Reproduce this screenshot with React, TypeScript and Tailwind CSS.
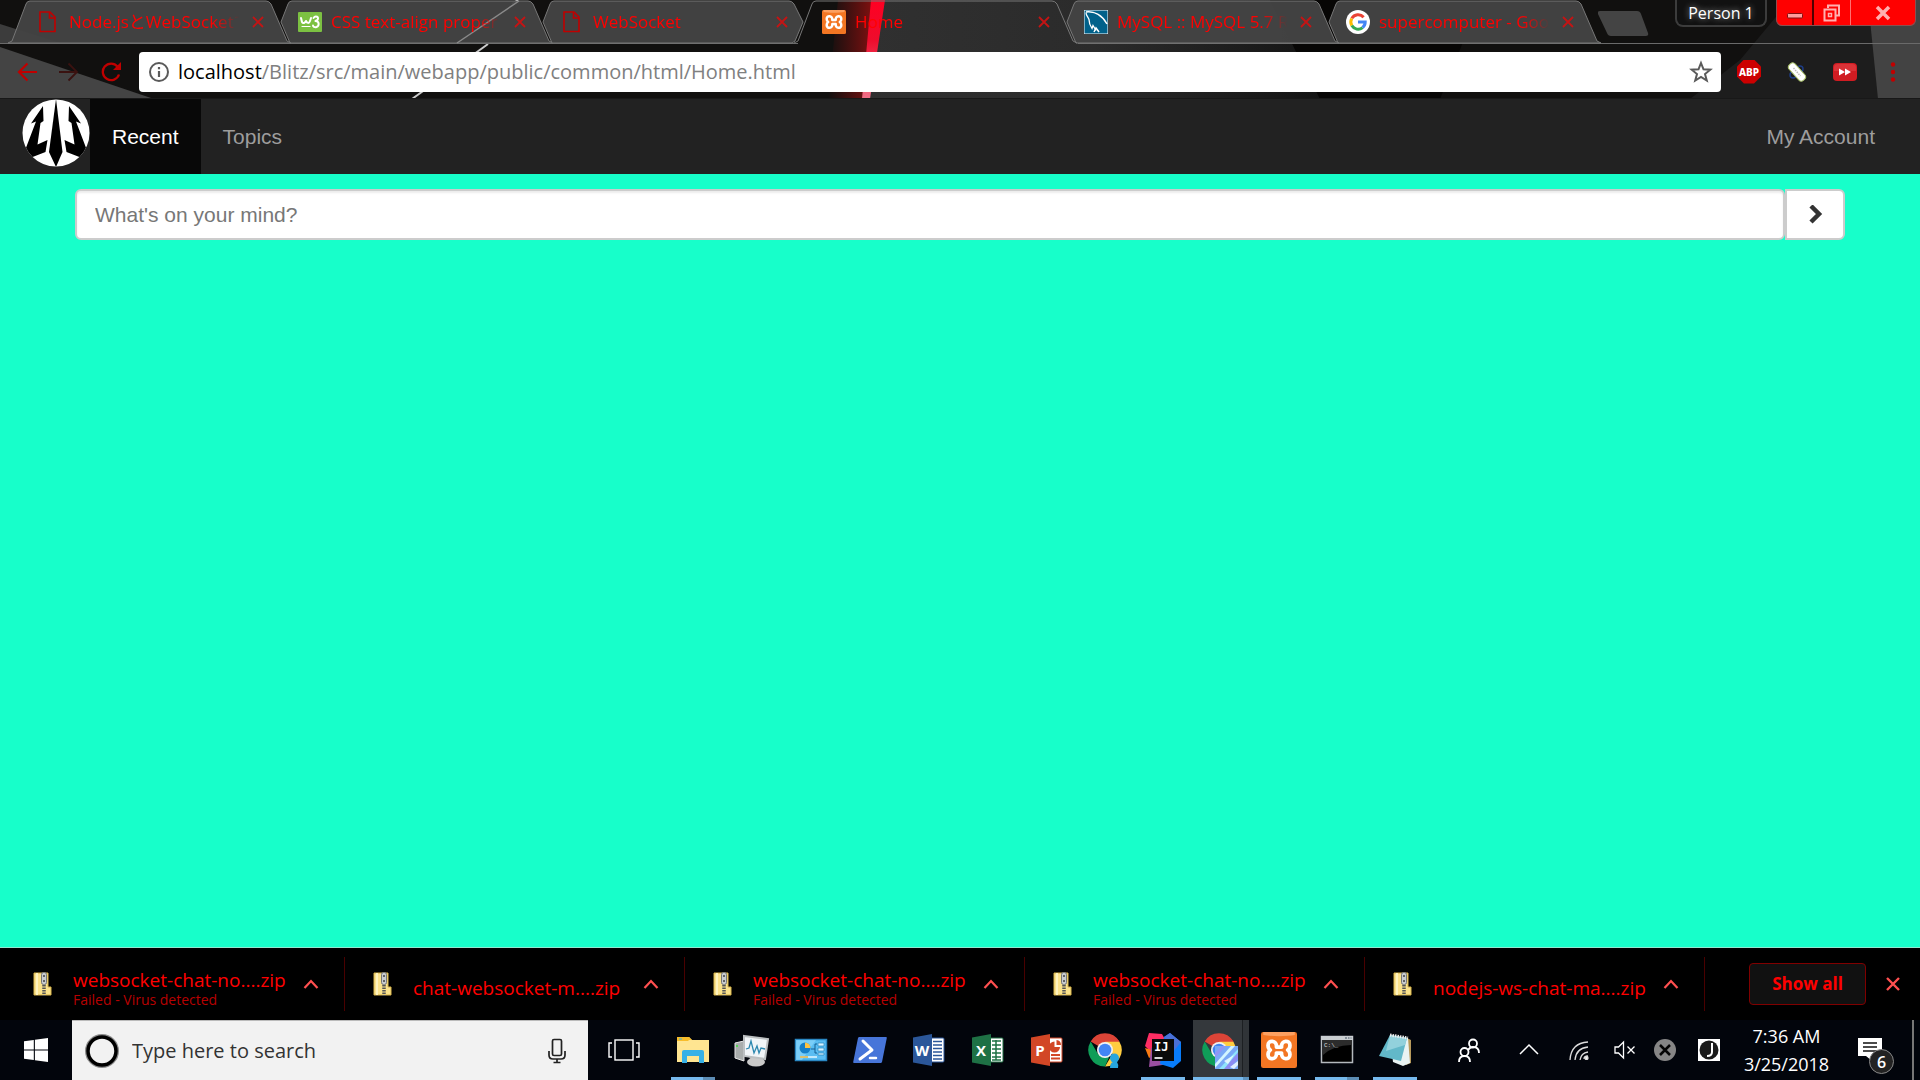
import React from "react";

type P = { className?: string };

const UI = "font-['Open_Sans','Noto_Sans_CJK_JP',sans-serif]";

/* ---------- favicons and small glyphs ---------- */

const FileIcon = () => (
  <svg viewBox="0 0 24 24" className="h-6 w-6" fill="none" stroke="#c00000" strokeWidth="1.6">
    <path d="M4 2h10l5 5v14.500H4z" />
    <path d="M13.500 2v6H19" />
  </svg>
);

const W3Icon = () => (
  <svg viewBox="0 0 24 24" className="h-6 w-6" fill="none" stroke="#fff" strokeLinecap="round" strokeLinejoin="round">
    <rect x="0" y="2" width="24" height="20" rx="1" fill="#7cc142" stroke="none" />
    <path d="M3 8l1 4c1 2 3 1 4-1 1 2 3 3 4 0l1-3" strokeWidth="2" />
    <path d="M15.500 8c2-3 6-1 4 2l-2 1c4 0 4 5 1 6-2 .5-3.500-.5-3.500-1.500" strokeWidth="2" />
    <path d="M4 16.500h8" strokeWidth="1.200" />
  </svg>
);

const XamppIcon = ({ className = "h-6 w-6" }: P) => (
  <svg viewBox="0 0 24 24" className={className}>
    <rect width="24" height="24" rx="1.500" fill="#f37623" />
    <path d="M1.500 0h21v2c-5 1-16 1-21 0z" fill="#ffb27c" opacity=".7" />
    <path
      d="M10.300 10C10.800 5.200 4.500 5 4.700 9c0 2 1.500 3 1.500 3s-1.500 1-1.500 3c-.2 4 6.100 3.800 5.600-1h3.400c-.5 4.800 5.800 5 5.600 1 0-2-1.500-3-1.500-3s1.500-1 1.500-3c.2-4-6.100-3.800-5.600 1z"
      fill="#f37623"
      stroke="#fff"
      strokeWidth="2.500"
      strokeLinejoin="round"
    />
  </svg>
);

const MysqlIcon = () => (
  <svg viewBox="0 0 24 24" className="h-6 w-6" fill="none" stroke="#fff">
    <rect width="24" height="24" rx="1" fill="#00618a" />
    <path d="M2 2.500c0 3 2 4 3 7 0 4 1 6 3 9l1-3 3 5" strokeWidth="1.300" />
    <path d="M2 2c8-1 16 3 21 12" strokeWidth="1.500" />
    <path d="M10 22l2-4 3 4" strokeWidth="1.500" />
  </svg>
);

const GoogleIcon = () => (
  <svg viewBox="0 0 24 24" className="h-6 w-6" fill="none" strokeWidth="3">
    <circle cx="12" cy="12" r="12" fill="#fff" />
    <path d="M17.600 7.200A7.200 7.200 0 0 0 5.800 8.400" stroke="#ea4335" />
    <path d="M5.800 8.400a7.200 7.200 0 0 0 0 7.200" stroke="#fbbc05" />
    <path d="M5.800 15.600a7.200 7.200 0 0 0 10.800 2" stroke="#34a853" />
    <path d="M16.600 17.600A7.200 7.200 0 0 0 19.200 12H12" stroke="#4285f4" />
  </svg>
);

/* ---------- browser tabs ---------- */

type TabInfo = { title: string; icon: React.ReactNode; shape: "first" | "mid" | "under" | "active"; z: string };

const TABS: TabInfo[] = [
  { title: "Node.jsとWebSocketで", icon: <FileIcon />, shape: "first", z: "z-10" },
  { title: "CSS text-align proper", icon: <W3Icon />, shape: "mid", z: "z-0" },
  { title: "WebSocket", icon: <FileIcon />, shape: "under", z: "z-0" },
  { title: "Home", icon: <XamppIcon />, shape: "active", z: "z-20" },
  { title: "MySQL :: MySQL 5.7 R", icon: <MysqlIcon />, shape: "mid", z: "z-10" },
  { title: "supercomputer - Goo", icon: <GoogleIcon />, shape: "mid", z: "z-0" },
];

const OUTLINE = {
  first: "M0 43L4 41L18 4Q19 1 22 1H258Q261 1 263 4L279 41L283 43Z",
  mid: "M20 43L11 22L18 4Q19 1 22 1H258Q261 1 263 4L279 41L283 43Z",
  under: "M20 43L11 22L18 4Q19 1 22 1H257Q260 1 262 4L271 22L263 41L260 43Z",
  active: "M0 43L4 41L18 4Q19 1 22 1H258Q261 1 263 4L279 41L283 43",
};

const Tab = ({ tab }: { tab: TabInfo }) => (
  <div className={`relative -mr-[21px] h-11 w-[283px] shrink-0 ${tab.z}`}>
    <svg viewBox="0 0 283 44" className="absolute inset-0 h-11 w-[283px]">
      <path d={OUTLINE[tab.shape]} fill={tab.shape === "active" ? "none" : "#444444"} fillOpacity=".96" stroke="#777" />
      {tab.title.startsWith("CSS") && <path d="M249 1L187 43" stroke="#8a8a8a" strokeWidth="1.500" />}
    </svg>
    <div className="relative flex h-11 items-center pb-px pl-7">
      {tab.icon}
      <span className="ml-[9px] w-[174px] overflow-hidden whitespace-nowrap text-[17px] leading-6 text-[#ff0000] [mask-image:linear-gradient(to_right,#000_82%,transparent_98%)]">
        {tab.title}
      </span>
      <button aria-label={`Close ${tab.title}`} className="ml-[9px] h-3 w-3">
        <svg viewBox="0 0 12 12" className="h-3 w-3" stroke="#c41414" strokeWidth="1.800">
          <path d="M1 1l10 10M11 1L1 11" />
        </svg>
      </button>
    </div>
  </div>
);

const ThemeBackdrop = () => (
  <svg viewBox="0 0 1920 99" preserveAspectRatio="none" className="absolute inset-0 h-full w-full">
    <defs>
      <linearGradient id="glow">
        <stop offset="0" stopColor="#7a1010" stopOpacity="0" />
        <stop offset="1" stopColor="#8a1010" />
      </linearGradient>
      <linearGradient id="steel">
        <stop offset="0" stopColor="#303030" />
        <stop offset=".5" stopColor="#2b2b2b" />
        <stop offset="1" stopColor="#141414" />
      </linearGradient>
      <linearGradient id="beam" x1="0" y1="0" x2="0" y2="1">
        <stop offset="0" stopColor="#ff0022" />
        <stop offset=".4" stopColor="#ee0c2c" />
        <stop offset="1" stopColor="#f07088" />
      </linearGradient>
    </defs>
    <rect width="1920" height="99" fill="#11100f" />
    <path d="M0 24L60 43H0z" fill="#3c3c3c" />
    <path d="M0 47L154 99H0z" fill="#444" />
    <path d="M488 44L412 99" stroke="#ccc" strokeWidth="2" />
    <path d="M518 0L512 4" stroke="#eee" strokeWidth="2" />
    <path d="M880 0H1270L1320 99H868z" fill="url(#steel)" />
    <path d="M1270 0H1480L1440 99H1320z" fill="#070605" />
    <path d="M838 0H876L868 99H828z" fill="url(#glow)" />
    <path d="M871 0H885L870 99H862z" fill="url(#beam)" />
    <path d="M1790 0H1920V99H1690L1740 60z" fill="#1d1d1d" />
    <path d="M1868 0H1920V99H1878z" fill="#434343" />
    <path d="M0 98.500H1920" stroke="#181818" />
    <path d="M0 43.500H798M1078 43.500H1920" stroke="#6a6a6a" />
  </svg>
);

const WindowControls = () => (
  <div className="flex h-[26px] overflow-hidden rounded-b-md border-x border-b border-[#8a5050] bg-[#ff0000]">
    <button aria-label="Minimize" className="grid w-[37px] place-items-center border-r-2 border-[#500000]">
      <svg viewBox="0 0 20 20" className="h-5 w-5"><rect x="2.500" y="10.500" width="15" height="4.500" rx="1" fill="#ff9c9c" stroke="#801010" /></svg>
    </button>
    <button aria-label="Restore" className="grid w-[37px] place-items-center border-r border-[#ff7070]">
      <svg viewBox="0 0 20 20" className="h-5 w-5" fill="none" stroke="#ffb0b0" strokeWidth="2">
        <path d="M6 5V2.500h11v10h-3" /><rect x="2.500" y="6.500" width="11" height="11" /><rect x="6.500" y="10.500" width="3" height="3" strokeWidth="1.500" />
      </svg>
    </button>
    <button aria-label="Close window" className="grid w-16 place-items-center">
      <svg viewBox="0 0 20 20" className="h-5 w-5" stroke="#ffb0b0" strokeWidth="3.500"><path d="M4 4l12 12M16 4L4 16" /></svg>
    </button>
  </div>
);

const BrowserChrome = () => (
  <header className="relative">
    <ThemeBackdrop />
    <div className="relative flex h-11 items-start pl-2">
      {TABS.map((t) => <Tab key={t.title} tab={t} />)}
      <button aria-label="New tab" className="ml-[18px] mt-[11px]">
        <svg viewBox="0 0 51 26" className="h-[26px] w-[51px]"><path d="M2 0H39Q42 0 43 3L50 22Q51 25 48 25H13Q10 25 9 22L0 3Q-1 0 2 0z" fill="#444" /></svg>
      </button>
      <div className="ml-auto flex pr-1">
        <button className="mr-[9px] h-[27px] w-[92px] rounded-b-lg border-x-2 border-b-2 border-[#3c3c3c] bg-[#111] text-base leading-6 text-white [text-shadow:0_0_6px_#aaa]">
          Person 1
        </button>
        <WindowControls />
      </div>
    </div>
    <div className="relative flex h-[55px] items-center">
      <div className="flex w-[139px] items-center gap-[22px] pl-[17px]">
        <button aria-label="Back">
          <svg viewBox="0 0 20 20" className="h-5 w-5" fill="none" stroke="#c00000" strokeWidth="2.200"><path d="M20 10H2M10.500 1.500L2 10l8.500 8.500" /></svg>
        </button>
        <button aria-label="Forward">
          <svg viewBox="0 0 20 20" className="h-5 w-5" fill="none" stroke="#3a1210" strokeWidth="1.800"><path d="M0 10h18M9.500 1.500L18 10l-8.500 8.500" /></svg>
        </button>
        <button aria-label="Reload">
          <svg viewBox="0 0 20 20" className="h-5 w-5" fill="none" stroke="#c00000" strokeWidth="2.300">
            <path d="M16.500 4.500A8.300 8.300 0 1 0 18 12.500" /><path d="M20 0v8h-8z" fill="#c00000" stroke="none" />
          </svg>
        </button>
      </div>
      <div className="flex h-10 flex-1 items-center rounded-sm bg-white pl-2.5 pr-2">
        <svg viewBox="0 0 20 20" className="h-5 w-5" fill="none" stroke="#5a5a5a" strokeWidth="2">
          <circle cx="10" cy="10" r="9" /><path d="M10 9v6M10 5v2.200" strokeWidth="2.200" />
        </svg>
        <span className="ml-[9px] flex-1 text-xl leading-6 text-[#808080]">
          <span className="text-black">localhost</span>/Blitz/src/main/webapp/public/common/html/Home.html
        </span>
        <button aria-label="Bookmark this page">
          <svg viewBox="0 0 24 24" className="h-6 w-6" fill="none" stroke="#5a5a5a" strokeWidth="2"><path d="M12 3l2.500 6.300 6.800.4-5.300 4.300 1.800 6.600L12 17l-5.800 3.600L8 14 2.700 9.700l6.800-.4z" /></svg>
        </button>
      </div>
      <div className="flex items-center gap-6 pl-4 pr-[15px]">
        <button aria-label="Adblock Plus" className="grid h-6 w-6 place-items-center bg-[#cc0000] font-['Noto_Sans'] text-[10px] font-extrabold leading-6 text-white [clip-path:polygon(29%_0,71%_0,100%_29%,100%_71%,71%_100%,29%_100%,0_71%,0_29%)]">ABP</button>
        <button aria-label="Eraser extension">
          <svg viewBox="0 0 24 24" className="h-6 w-6">
            <circle cx="15" cy="9" r="3" fill="none" stroke="#1d3c84" strokeWidth="1.500" /><circle cx="8" cy="15" r="3" fill="none" stroke="#1d3c84" strokeWidth="1.500" />
            <rect x="1.500" y="8" width="21" height="8" rx="3.500" fill="#fff" stroke="#a9c06a" transform="rotate(48 12 12)" />
            <path d="M8.500 8l7 8" stroke="#bbb" strokeWidth="1.500" strokeDasharray="1.500 1" />
          </svg>
        </button>
        <button aria-label="Video speed extension">
          <svg viewBox="0 0 24 24" className="h-6 w-6">
            <rect x="0" y="3" width="24" height="18" rx="4" fill="#d01c22" /><path d="M1 11V7q0-3 4-3h14q4 0 4 3v4z" fill="#e4484c" opacity=".5" /><path d="M6 8.500l6 3.500-6 3.500zM12 8.500l6 3.500-6 3.500z" fill="#fff" />
          </svg>
        </button>
        <button aria-label="Menu">
          <svg viewBox="0 0 24 24" className="h-6 w-6" fill="#c00000"><circle cx="12" cy="4.500" r="2.200" /><circle cx="12" cy="12" r="2.200" /><circle cx="12" cy="19.500" r="2.200" /></svg>
        </button>
      </div>
    </div>
  </header>
);

/* ---------- page ---------- */

const Trident = () => (
  <svg viewBox="0 0 68 68" className="h-[68px] w-[68px]">
    <defs><clipPath id="disc"><circle cx="34" cy="34" r="33.500" /></clipPath></defs>
    <circle cx="34" cy="34" r="33.500" fill="#fff" />
    <g clipPath="url(#disc)" fill="#000">
      <path d="M34 0L40.500 53L34 68L27 53z" />
      <path d="M21 7L9 24.500L14 22.500L2 54L8 59L23.500 53L25.500 41L15.500 45.500L18.500 24L21.500 22z" />
      <path d="M47 7L59 24.500L54 22.500L66 54L60 59L44.500 53L42.500 41L52.500 45.500L49.500 24L46.500 22z" />
    </g>
  </svg>
);

const Page = () => (
  <div className="flex flex-1 flex-col bg-[#17ffca] font-['Liberation_Sans',Arial,sans-serif] text-[21px] leading-[30px]">
    <nav className="flex h-[75px] bg-[#222222] pl-[22px] pr-[22px]">
      <a href="#home" aria-label="Blitz home"><Trident /></a>
      <a href="#recent" className="flex items-center bg-[#080808] px-[22px] text-white">Recent</a>
      <a href="#topics" className="flex items-center px-[22px] text-[#9d9d9d]">Topics</a>
      <a href="#account" className="ml-auto flex items-center px-[23px] text-[#9d9d9d]">My Account</a>
    </nav>
    <form className="mx-[75px] mt-[15px] flex h-[51px]" onSubmit={(e) => e.preventDefault()}>
      <input
        aria-label="What's on your mind?"
        placeholder="What's on your mind?"
        className="min-w-0 flex-1 rounded-md border-2 border-[#cccccc] bg-white px-[18px] shadow-[inset_0_2px_2px_rgba(0,0,0,0.075)] outline-none placeholder:text-[#777777]"
      />
      <button aria-label="Post" className="grid w-[60px] place-items-center rounded-r-md border-2 border-[#cccccc] bg-white">
        <svg viewBox="0 0 20 20" className="h-5 w-5" fill="none" stroke="#333" strokeWidth="4.500"><path d="M6 1l8 8-8 8" /></svg>
      </button>
    </form>
  </div>
);

/* ---------- download shelf ---------- */

const ZipIcon = () => (
  <svg viewBox="0 0 20 24" className="h-6 w-5">
    <path d="M1 1h14v14h3v8H1z" fill="#fbe38c" stroke="#d8b44a" /><path d="M4 1v22" stroke="#fff3bd" strokeWidth="2" />
    <rect x="8.500" y="0.500" width="5" height="12" rx="2" fill="#c9ccd0" stroke="#777" /><path d="M11 3v2M11 8v2" stroke="#444" strokeWidth="1.500" />
    <path d="M11 13v11" stroke="#555" strokeWidth="3.500" strokeDasharray="1.500 1" />
  </svg>
);

const DOWNLOADS = [
  { name: "websocket-chat-no....zip", failed: true },
  { name: "chat-websocket-m....zip", failed: false },
  { name: "websocket-chat-no....zip", failed: true },
  { name: "websocket-chat-no....zip", failed: true },
  { name: "nodejs-ws-chat-ma....zip", failed: false },
];

const DownloadShelf = () => (
  <section aria-label="Downloads" className="flex h-[73px] items-center border-t border-[#8fe8d0] bg-black pl-[5px] pr-5">
    {DOWNLOADS.map((d, i) => (
      <div key={i} className="flex h-[54px] w-[340px] shrink-0 items-center border-r border-[#4a0000] pl-7 pr-[25px]">
        <ZipIcon />
        <div className={d.failed ? "ml-5 flex-1 whitespace-nowrap pt-2.5" : "ml-5 flex-1 whitespace-nowrap pt-2"}>
          <div className="text-[19px] leading-[22px] text-[#ff0000]">{d.name}</div>
          {d.failed && <div className="text-sm leading-[18px] text-[#b80000]">Failed - Virus detected</div>}
        </div>
        <button aria-label="Download options">
          <svg viewBox="0 0 16 16" className="h-4 w-4" fill="none" stroke="#ff5050" strokeWidth="2.200"><path d="M1.500 12L8 5l6.500 7" /></svg>
        </button>
      </div>
    ))}
    <button className="ml-auto h-[42px] w-[117px] rounded border border-[#800000] bg-[#111] text-[17px] font-bold leading-6 text-[#ff0000]">Show all</button>
    <button aria-label="Close downloads bar" className="ml-5">
      <svg viewBox="0 0 14 14" className="h-3.5 w-3.5" stroke="#ff5050" strokeWidth="2.400"><path d="M1 1l12 12M13 1L1 13" /></svg>
    </button>
  </section>
);

/* ---------- taskbar ---------- */

const ExplorerIcon = () => (
  <svg viewBox="0 0 36 36" className="h-9 w-9">
    <path d="M2 5h12l3 3h17v22H2z" fill="#ffe591" /><path d="M2 5h12l3 3h-3l-1 1H2z" fill="#f8bd2b" /><path d="M4 7h3" stroke="#3ab0e2" />
    <path d="M7 31V20q0-2 2-2h18q2 0 2 2v11h-5v-7H12v7z" fill="#38b1e6" />
  </svg>
);
const MonitorIcon = () => (
  <svg viewBox="0 0 36 36" className="h-9 w-9">
    <path d="M1 11l9-2v20l-9-3z" fill="#a9adad" stroke="#e8e8e8" /><circle cx="3" cy="14" r="1" fill="#3be03b" />
    <path d="M15 24l8 3 1 6h-6z" fill="#aaa" /><ellipse cx="22" cy="30" rx="9" ry="4.500" fill="#c9c9c9" />
    <path d="M10 4l24 3-3 20-21-3z" fill="#f1f5f8" stroke="#bcc0c2" strokeWidth="2" />
    <path d="M12 17l3-1 2-7 3 12 3-7 2 7 2-5 4 1" fill="none" stroke="#2d88b0" strokeWidth="1.300" />
  </svg>
);
const ControlIcon = () => (
  <svg viewBox="0 0 36 36" className="h-9 w-9">
    <rect x="2.500" y="7.500" width="31" height="21" fill="#5abdf2" stroke="#2a88c4" strokeWidth="1.500" /><path d="M3 8h20L9 28H3z" fill="#90d8fb" opacity=".6" />
    <circle cx="12" cy="16" r="5.500" fill="#167fc8" /><path d="M12 16v-5.500a5.500 5.500 0 0 1 5.500 5.500z" fill="#ffc342" />
    <path d="M18 17h4v-5h2M22 17v4h2" fill="none" stroke="#155e92" /><path d="M25 11h6v3h-6zM25 16h6v3h-6zM25 21h6v2h-6z" fill="#d7f3ff" stroke="#2582b8" strokeWidth=".7" />
    <path d="M7 25h17" stroke="#e4f8ff" strokeWidth="1.500" /><path d="M7 25h8" stroke="#e0b040" strokeWidth="1.500" />
  </svg>
);
const PowerShellIcon = () => (
  <svg viewBox="0 0 36 36" className="h-9 w-9">
    <path d="M6 6q.3-1 1.500-1H34q1 0 .8 1L30 30q-.3 1-1.500 1H2q-1 0-.8-1z" fill="#4775d9" />
    <path d="M11 9l9 9-12 9" fill="none" stroke="#fff" strokeWidth="3" strokeLinecap="round" strokeLinejoin="round" /><path d="M18 26h6" stroke="#fff" strokeWidth="2.500" strokeLinecap="round" />
  </svg>
);
const OfficeIcon = ({ letter, color, kind }: { letter: string; color: string; kind: "w" | "x" | "p" }) => (
  <svg viewBox="0 0 36 36" className="h-9 w-9">
    <rect x="15" y="6" width="18" height="24" rx="1" fill="#fff" stroke={color} />
    {kind === "w" && <path d="M22 9.500h9M22 13h9M22 16.500h9M22 20h9M22 23.500h9M22 27h9" stroke={color} strokeWidth="1.500" />}
    {kind === "x" && <path d="M22 9h9M22 13h9M22 17h9M22 21h9M22 25h9M22 28h9M26 8v20" stroke={color} strokeWidth="1.500" />}
    {kind === "p" && <path d="M22 23h9M22 26.500h9" stroke={color} strokeWidth="1.800" />}
    {kind === "p" && <path d="M25.500 15V9.500a5.500 5.500 0 1 0 5.500 5.500zM27.500 13V8a5 5 0 0 1 4.500 5z" fill={color} />}
    <path d="M2 5.500L21 2v32L2 30.500z" fill={color} />
    <text x="11" y="23.500" textAnchor="middle" fontSize="15" fontWeight="700" fill="#fff" className="font-['Open_Sans']">{letter}</text>
  </svg>
);
const ChromeIcon = ({ overlay }: { overlay: "person" | "picture" }) => (
  <svg viewBox="0 0 38 38" className="h-[38px] w-[38px]">
    <path d="M19 19L4.700 10.500A16.500 16.500 0 0 1 33.300 10.500z" fill="#db4437" /><path d="M19 10.500h14.300A16.500 16.500 0 0 1 19 35.500l7.500-12.500z" fill="#ffcd40" />
    <path d="M19 35.500A16.500 16.500 0 0 1 4.700 10.500L12 23l11 3.500z" fill="#0f9d58" /><path d="M19 10.500h14.300l-1-1.500-6-4-13 0z" fill="#db4437" />
    <circle cx="19" cy="19" r="8" fill="#f1f1f1" /><circle cx="19" cy="19" r="6.300" fill="#4285f4" />
    {overlay === "person" ? (
      <g fill="#27a5dc"><circle cx="28.500" cy="27" r="4.500" /><path d="M24 37q0-5 3-6h4q2 3 1 6z" /></g>
    ) : (
      <g>
        <rect x="15" y="15" width="23" height="23" fill="#78a8f6" />
        <path d="M15 22L22 15h4L15 27z" fill="#8f96f5" /><path d="M15 33L31 15h4L15 37z" fill="#d2f5ff" /><path d="M22 38L38 22v6l-9 10z" fill="#8c8cf2" />
        <path d="M19 38L38 18v3L24 38z" fill="#8fe4fb" /><path d="M24 30l10-6-6 9zM30 36l8-6v4l-4 4z" fill="#f0faff" opacity=".85" />
      </g>
    )}
  </svg>
);
const IntelliJIcon = () => (
  <svg viewBox="0 0 36 36" className="h-9 w-9">
    <path d="M4 1l13 1 5 9L6 20 0 14z" fill="#fe2d63" /><path d="M0 16l7 2 2 5-5 3z" fill="#f97a12" /><path d="M6 16l10-4 8 20-20 3z" fill="#9a4fa0" /><path d="M19 5l6-4 11 9v19l-8 7-13-4z" fill="#087cfa" /><path d="M19 5l6-4 11 9-8 10z" fill="#4a6fd6" />
    <rect x="7" y="7" width="22" height="22" fill="#0a0a0a" /><path d="M9.500 26h8" stroke="#fff" strokeWidth="1.700" />
    <text x="9" y="19" fontSize="12" fontWeight="700" fill="#fff" className="font-['DejaVu_Sans_Mono']">IJ</text>
  </svg>
);
const CmdIcon = () => (
  <svg viewBox="0 0 36 36" className="h-9 w-9">
    <rect x="2.500" y="4.500" width="31" height="26" fill="#000" stroke="#b4b9be" strokeWidth="1.500" /><path d="M2 4h32v4H2z" fill="#c9ced2" /><path d="M4 8h28v5Q15 13 4 23z" fill="#2c2c2c" />
    <path d="M26 6h2M29 6h1.500M31.500 6h1" stroke="#456" />
    <text x="5" y="14.500" fontSize="6" fill="#ddd" className="font-['Liberation_Mono']">C:\_</text>
  </svg>
);
const NotepadIcon = () => (
  <svg viewBox="0 0 36 36" className="h-9 w-9">
    <path d="M28 5l6 3v23l-5 2z" fill="#b79a5c" /><path d="M13 3l18 3 2 25-7 3-10-4z" fill="#e9f3f3" /><path d="M13 3l17 3-6 23-22-5z" fill="#62b8c9" /><path d="M13 3l17 3-2 7-19 6z" fill="#a6dbe4" opacity=".7" />
    <path d="M13 3l18 3" stroke="#eee" strokeWidth="3" strokeDasharray="1.500 1" />
  </svg>
);

type App = { name: string; icon: React.ReactNode; slot: string; bar?: "full" | "stacked"; active?: boolean };
const APPS: App[] = [
  { name: "File Explorer", icon: <ExplorerIcon />, slot: "w-[59px]", bar: "stacked" },
  { name: "Performance Monitor", icon: <MonitorIcon />, slot: "w-[59px]" },
  { name: "Control Panel", icon: <ControlIcon />, slot: "w-[59px]" },
  { name: "PowerShell", icon: <PowerShellIcon />, slot: "w-[59px]" },
  { name: "Word", icon: <OfficeIcon letter="W" color="#2b579a" kind="w" />, slot: "w-[59px]" },
  { name: "Excel", icon: <OfficeIcon letter="X" color="#1e7145" kind="x" />, slot: "w-[59px]" },
  { name: "PowerPoint", icon: <OfficeIcon letter="P" color="#d24726" kind="p" />, slot: "w-[59px]" },
  { name: "Chrome profile", icon: <ChromeIcon overlay="person" />, slot: "w-[58px]" },
  { name: "IntelliJ IDEA", icon: <IntelliJIcon />, slot: "w-[58px]", bar: "full" },
  { name: "Chrome", icon: <ChromeIcon overlay="picture" />, slot: "w-[58px]", bar: "stacked", active: true },
  { name: "XAMPP", icon: <XamppIcon className="h-9 w-9" />, slot: "w-[58px]", bar: "full" },
  { name: "Command Prompt", icon: <CmdIcon />, slot: "w-[58px]", bar: "stacked" },
  { name: "Notepad", icon: <NotepadIcon />, slot: "w-[58px]", bar: "full" },
];

const AppButton = ({ app }: { app: App }) => (
  <div className={`${app.slot} flex h-full justify-center`}>
    <button aria-label={app.name} className={app.active ? "relative grid h-full w-14 place-items-center bg-[#34383c]" : "relative grid h-full w-11 place-items-center"}>
      {app.active && <span className="absolute inset-y-0 right-0 w-[7px] border-l border-[#1c1f22] bg-[#303438]" />}
      <span className={app.active ? "relative pr-1" : "relative"}>{app.icon}</span>
      {app.bar && (
        <span className="absolute inset-x-0 bottom-0 flex h-[3px] bg-[#76b9ed]">
          {app.bar === "stacked" && <span className={app.active ? "ml-auto w-1.5 bg-[#5c93bf]" : "ml-auto w-3 bg-[#5c8db5]"} />}
        </span>
      )}
    </button>
  </div>
);

const Taskbar = () => (
  <footer className="flex h-[60px] items-center bg-[#02050c] text-white">
    <button aria-label="Start" className="grid h-full w-[72px] place-items-center">
      <svg viewBox="0 0 24 24" className="h-6 w-6" fill="#fff"><path d="M0 3.300l9.800-1.300v9.400H0zM10.900 1.800L24 0v11.400H10.900zM0 12.600h9.800V22L0 20.700zM10.900 12.600H24V24l-13.100-1.800z" /></svg>
    </button>
    <label className="flex h-full w-[516px] items-center border-t border-[#bbb] bg-[#f2f2f2] pl-[13px] pr-[22px]">
      <svg viewBox="0 0 34 34" className="h-[34px] w-[34px]" fill="none"><circle cx="17" cy="17" r="15" stroke="#8a8a8a" strokeWidth="4" /><circle cx="17" cy="17" r="14" stroke="#000" strokeWidth="3.500" /></svg>
      <input aria-label="Type here to search" placeholder="Type here to search" className="ml-[13px] min-w-0 flex-1 bg-transparent text-[20px] leading-6 outline-none placeholder:text-[#333]" />
      <svg viewBox="0 0 18 26" className="h-[26px] w-[18px]" fill="none" stroke="#222" strokeWidth="1.700"><rect x="4.500" y="1.500" width="9" height="16" rx="1.500" /><path d="M1 13v4q0 4 4 4h8q4 0 4-4v-4M9 21v3.500M5.500 24.500h7" /></svg>
    </label>
    <button aria-label="Task view" className="grid h-full w-[75px] place-items-center pr-1">
      <svg viewBox="0 0 32 22" className="h-[22px] w-8" fill="none" stroke="#fff" strokeWidth="1.400"><rect x="7" y="1" width="18" height="20" /><path d="M4 4H1v14h3M28 4h3v14h-3" /></svg>
    </button>
    <div className="flex h-full">{APPS.map((a) => <AppButton key={a.name} app={a} />)}</div>
    <div className="ml-auto flex h-full items-center">
      <svg viewBox="0 0 24 24" className="mr-[38px] h-6 w-6" fill="none" stroke="#fff" strokeWidth="1.800"><circle cx="16" cy="5.500" r="4" /><circle cx="7.500" cy="14" r="4" /><path d="M2 24q0-6 5.500-6t5.500 6M11 12q2-3 5-3 6 0 6 6" /></svg>
      <svg viewBox="0 0 20 20" className="mr-[30px] h-5 w-5" fill="none" stroke="#fff" strokeWidth="1.500"><path d="M1 14l9-9 9 9" /></svg>
      <svg viewBox="0 0 20 20" className="mr-[25px] h-5 w-5" fill="none" stroke="#ddd" strokeWidth="1.300"><path d="M1 20Q2 3 19 2M6 20Q7 8 19 7M11 20q1-7 8-8" /><path d="M15 19q0-3 4-3" /><circle cx="17.500" cy="18" r="1.500" fill="#fff" /></svg>
      <svg viewBox="0 0 22 20" className="mr-[18px] h-5 w-[22px]" fill="none" stroke="#fff" strokeWidth="1.300"><path d="M1 7h3.500L9.500 2v16l-5-5H1zM13.500 6.500l7 7M20.500 6.500l-7 7" /></svg>
      <svg viewBox="0 0 22 22" className="mr-[22px] h-[22px] w-[22px]"><circle cx="11" cy="11" r="11" fill="#868686" /><path d="M6 6l10 10M16 6L6 16" stroke="#050505" strokeWidth="2.500" /></svg>
      <svg viewBox="0 0 22 22" className="h-[22px] w-[22px]" fill="none"><rect width="22" height="22" fill="#fff" /><circle cx="11" cy="11" r="9.500" fill="#1b1b1b" /><path d="M14 4v9q0 4-5 4" stroke="#fff" strokeWidth="2" /></svg>
      <div className="mr-px w-[137px] pr-1 text-center text-lg leading-7"><div>7:36 AM</div><div>3/25/2018</div></div>
      <button aria-label="Notifications" className="relative mr-[18px] h-9 w-9">
        <svg viewBox="0 0 36 36" className="h-9 w-9"><path d="M0 6h24v18H14v5l-6-5H0z" fill="#fff" /><path d="M5 11h14M5 15h14M5 19h14" stroke="#111" strokeWidth="1.300" /></svg>
        <span className="absolute -bottom-1.5 right-0 grid h-[25px] w-[25px] place-items-center rounded-full border border-[#888] bg-[#222] text-base font-semibold leading-5">6</span>
      </button>
      <span className="h-full w-2 border-l-2 border-[#777]" />
    </div>
  </footer>
);

export default function App() {
  return (
    <div className={`flex min-h-screen flex-col overflow-hidden ${UI}`}>
      <BrowserChrome />
      <Page />
      <DownloadShelf />
      <Taskbar />
    </div>
  );
}
